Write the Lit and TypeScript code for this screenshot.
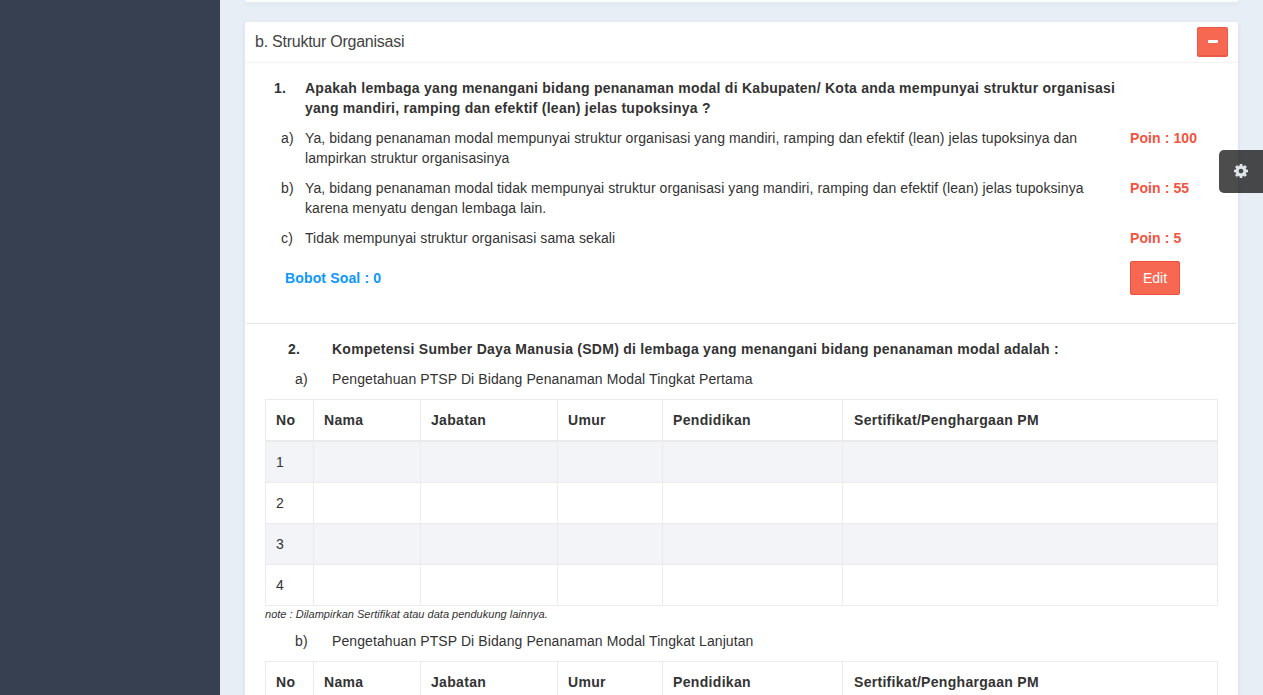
import { LitElement, html, css } from "lit";
import { customElement } from "lit/decorators.js";

const columns = ["No", "Nama", "Jabatan", "Umur", "Pendidikan", "Sertifikat/Penghargaan PM"];

const options = [
  {
    key: "a)",
    lines: [
      "Ya, bidang penanaman modal mempunyai struktur organisasi yang mandiri, ramping dan efektif (lean) jelas tupoksinya dan",
      "lampirkan struktur organisasinya",
    ],
    points: 100,
  },
  {
    key: "b)",
    lines: [
      "Ya, bidang penanaman modal tidak mempunyai struktur organisasi yang mandiri, ramping dan efektif (lean) jelas tupoksinya",
      "karena menyatu dengan lembaga lain.",
    ],
    points: 55,
  },
  { key: "c)", lines: ["Tidak mempunyai struktur organisasi sama sekali"], points: 5 },
];

const lines = (items: string[]) => items.map((line) => html`<div class="line">${line}</div>`);

@customElement("staff-table")
class StaffTable extends LitElement {
  static styles = css`
    :host { display: block; }
    .table { width: 953px; table-layout: fixed; border-collapse: collapse; font-size: 14px; line-height: 20px; }
    .th, .td { border: 1px solid #ebebeb; padding: 10px; text-align: left; height: 20px; white-space: nowrap; }
    .th { border-bottom-width: 2px; font-weight: 700; letter-spacing: 0.33px; }
    .th:last-child { padding-left: 11px; letter-spacing: 0.3px; }
    .row:nth-child(odd) { background: #f3f4f8; }
    .c0 { width: 48px; }
    .c1 { width: 107px; }
    .c2 { width: 137px; }
    .c3 { width: 105px; }
    .c4 { width: 180px; }
  `;
  render() {
    return html`<table class="table">
      <colgroup>${columns.map((_, i) => html`<col class="c${i}" />`)}</colgroup>
      <thead><tr>${columns.map((c) => html`<th class="th">${c}</th>`)}</tr></thead>
      <tbody>
        ${[1, 2, 3, 4].map(
          (n) => html`<tr class="row">${columns.map((_, i) => html`<td class="td">${i === 0 ? n : ""}</td>`)}</tr>`
        )}
      </tbody>
    </table>`;
  }
}

@customElement("app-root")
class AppRoot extends LitElement {
  static styles = css`
    :host {
      display: flex;
      height: 695px;
      overflow: hidden;
      position: relative;
      background: #e7eef5;
      color: #333;
      font: 14px/20px "Liberation Sans", Arial, sans-serif;
    }
    .sidebar { flex: none; width: 220px; background: #364050; }
    .content { flex: 1; min-width: 0; padding: 0 25px; display: flex; flex-direction: column; gap: 20px; }
    .card { background: #fff; border-radius: 2px; box-shadow: 0 2px 5px rgba(0, 0, 0, 0.08); }
    .previous { flex: none; height: 2px; background: #fafbfb; }
    .main { flex: none; height: 760px; }
    .header {
      box-sizing: border-box;
      height: 41px;
      padding: 5px 10px 5px;
      display: flex;
      justify-content: space-between;
      border-bottom: 1px solid #f3f3f3;
    }
    .title { font-size: 16px; line-height: 29px; color: #444; letter-spacing: -0.25px; }
    .btn {
      box-sizing: border-box;
      border: 1px solid #ee4f3d;
      border-radius: 2px;
      background: #f66852;
      color: #fff;
      font: inherit;
      padding: 0;
      display: flex;
      align-items: center;
      justify-content: center;
    }
    .collapse { width: 31px; height: 30px; border-bottom-width: 2px; border-color: #e95945; }
    .edit { width: 50px; height: 34px; margin: -7px 0; }
    .question { display: flex; flex-direction: column; gap: 10px; margin: 0 1px; padding: 15px 19px 35px; border-bottom: 1px solid #e6e6e6; }
    .item { display: grid; grid-template-columns: 40px 825px 1fr; }
    .key { box-sizing: border-box; padding-left: 16px; letter-spacing: 0.2px; }
    .number { padding-left: 9px; }
    .line { white-space: nowrap; letter-spacing: 0.09px; }
    .bold { font-weight: 700; }
    .bold .line { letter-spacing: 0.26px; }
    .points { color: #f4533d; font-weight: 700; letter-spacing: 0.1px; }
    .foot { margin-top: 10px; }
    .weight { grid-column: 1 / 3; padding-left: 20px; color: #0c97ff; font-weight: 700; letter-spacing: 0.15px; }
    .section { padding: 15px 20px 0; }
    .heading { display: flex; padding-bottom: 10px; }
    .marker { box-sizing: border-box; flex: none; width: 67px; padding-left: 30px; letter-spacing: 0.2px; }
    .marker-number { padding-left: 23px; }
    .note { font-size: 11px; line-height: 15px; font-style: italic; padding: 1px 0 9px; white-space: nowrap; letter-spacing: 0.015px; }
    .settings {
      position: absolute;
      top: 150px;
      right: 0;
      box-sizing: border-box;
      width: 44px;
      height: 43px;
      padding-bottom: 1px;
      border-radius: 5px 0 0 5px;
      background: rgba(0, 0, 0, 0.7);
      display: flex;
      align-items: center;
      justify-content: center;
    }
  `;

  render() {
    return html`
      <aside class="sidebar"></aside>
      <main class="content">
        <section class="card previous"></section>
        <section class="card main">
          <header class="header">
            <div class="title">b. Struktur Organisasi</div>
            <button class="btn collapse" aria-label="Collapse">
              <svg width="10" height="4" viewBox="0 0 10 4"><rect width="10" height="3" rx="0.7" fill="#fff" /></svg>
            </button>
          </header>
          <div class="question">
            <div class="item bold">
              <div class="key number">1.</div>
              <div>
                ${lines([
                  "Apakah lembaga yang menangani bidang penanaman modal di Kabupaten/ Kota anda mempunyai struktur organisasi",
                  "yang mandiri, ramping dan efektif (lean) jelas tupoksinya ?",
                ])}
              </div>
            </div>
            ${options.map(
              (o) => html`<div class="item">
                <div class="key">${o.key}</div>
                <div>${lines(o.lines)}</div>
                <div class="points">Poin : ${o.points}</div>
              </div>`
            )}
            <div class="item foot">
              <div class="weight">Bobot Soal : 0</div>
              <button class="btn edit">Edit</button>
            </div>
          </div>
          <div class="section">
            <div class="heading bold">
              <div class="marker marker-number">2.</div>
              <div class="line">Kompetensi Sumber Daya Manusia (SDM) di lembaga yang menangani bidang penanaman modal adalah :</div>
            </div>
            <div class="heading">
              <div class="marker">a)</div>
              <div class="line">Pengetahuan PTSP Di Bidang Penanaman Modal Tingkat Pertama</div>
            </div>
            <staff-table></staff-table>
            <div class="note">note : Dilampirkan Sertifikat atau data pendukung lainnya.</div>
            <div class="heading">
              <div class="marker">b)</div>
              <div class="line">Pengetahuan PTSP Di Bidang Penanaman Modal Tingkat Lanjutan</div>
            </div>
            <staff-table></staff-table>
          </div>
        </section>
      </main>
      <div class="settings">
        <svg width="14" height="14" viewBox="0 0 1536 1536">
          <path
            fill="#e0e4e6"
            d="M1024 768q0-106-75-181t-181-75-181 75-75 181 75 181 181 75 181-75 75-181zm512-109v222q0 12-8 23t-20 13l-185 28q-19 54-39 91 35 50 107 138 10 12 10 25t-9 23q-27 37-99 108t-94 71q-12 0-26-9l-138-108q-44 23-91 38-16 136-29 186-7 28-36 28H657q-14 0-24.500-8.500T621 1506l-28-184q-49-16-90-37l-141 107q-10 9-25 9-14 0-25-11-126-114-165-168-7-10-7-23 0-12 8-23 15-21 51-66.500t54-70.500q-27-50-41-99L29 913q-13-2-21-12.500T0 877V655q0-12 8-23t19-13l186-28q14-46 39-92-40-57-107-138-10-12-10-24 0-10 9-23 26-36 98.500-107.500T337 135q13 0 26 10l138 107q44-23 91-38 16-136 29-186 7-28 36-28h222q14 0 24.500 8.500T915 30l28 184q49 16 90 37l142-107q9-9 24-9 13 0 25 10 129 119 165 170 7 8 7 22 0 12-8 23-15 21-51 66.500t-54 70.500q26 50 41 98l183 28q13 2 21 12.500t8 23.500z"
          />
        </svg>
      </div>
    `;
  }
}
